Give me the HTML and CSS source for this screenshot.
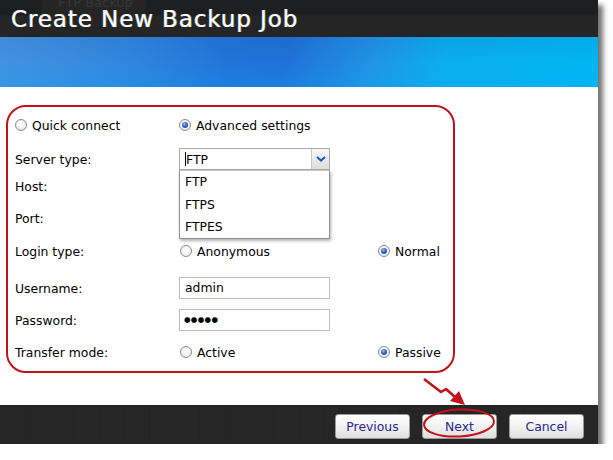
FILE: index.html
```html
<!DOCTYPE html>
<html>
<head>
<meta charset="utf-8">
<link rel="stylesheet" href="styles.css">
</head>
<body>
<div class="window">
  <header class="titlebar">
    <span class="ghost-tab">FTP Backup</span>
    <h1 class="title">Create New Backup Job</h1>
  </header>
  <div class="banner"><div class="swoosh"></div></div>
  <main class="content">
    <div class="redbox">
      <div class="row">
        <label class="opt"><span class="radio"></span>Quick connect</label>
        <label class="opt"><span class="radio on"></span>Advanced settings</label>
      </div>
      <div class="row">
        <span class="lbl">Server type:</span>
        <div class="select-wrap">
          <div class="select"><span class="caret"></span><span class="sel-text">FTP</span><span class="sel-btn"><svg width="10" height="6" viewBox="0 0 10 6"><path d="M1 1 L5 4.5 L9 1" fill="none" stroke="#1a5cc8" stroke-width="2.2"/></svg></span></div>
          <ul class="dropdown">
            <li>FTP</li>
            <li>FTPS</li>
            <li>FTPES</li>
          </ul>
        </div>
      </div>
      <div class="row">
        <span class="lbl">Host:</span>
        <div class="field"></div>
      </div>
      <div class="row">
        <span class="lbl">Port:</span>
        <div class="field"></div>
      </div>
      <div class="row">
        <span class="lbl">Login type:</span>
        <label class="opt ind"><span class="radio"></span>Anonymous</label>
        <label class="opt"><span class="radio on"></span>Normal</label>
      </div>
      <div class="row">
        <span class="lbl">Username:</span>
        <div class="field">admin</div>
      </div>
      <div class="row">
        <span class="lbl">Password:</span>
        <div class="field pw">●●●●●</div>
      </div>
      <div class="row">
        <span class="lbl">Transfer mode:</span>
        <label class="opt ind"><span class="radio"></span>Active</label>
        <label class="opt"><span class="radio on"></span>Passive</label>
      </div>
    </div>
  </main>
  <footer class="footer">
    <button class="btn">Previous</button>
    <button class="btn">Next</button>
    <button class="btn">Cancel</button>
  </footer>
  <svg class="annot" width="598" height="460" viewBox="0 0 598 460">
    <polyline points="424,379 441,392 446,389 455,397" fill="none" stroke="#c4121a" stroke-width="2.6" stroke-linejoin="round"/>
    <polygon points="465,405 450,401 459,391" fill="#c4121a"/>
    <ellipse cx="459" cy="423" rx="35" ry="13.5" transform="rotate(-3 459 423)" fill="none" stroke="#c4121a" stroke-width="2"/>
  </svg>
</div>
</body>
</html>
```
FILE: styles.css
```css
* { box-sizing: border-box; }
html, body { margin: 0; padding: 0; background: #fff; }
body { font-family: "DejaVu Sans", Verdana, sans-serif; font-size: 12.4px; color: #000; }

.window {
  position: relative;
  width: 598px;
  height: 444px;
  display: flex;
  flex-direction: column;
  background: #fff;
  box-shadow: 5px 5px 5px rgba(0,0,0,0.55);
}

.titlebar {
  position: relative;
  height: 37px;
  background: linear-gradient(#1e1f21 0, #1e1f21 15px, #252525 16px, #252525 100%);
  overflow: hidden;
}
.ghost-tab {
  position: absolute;
  left: 42px;
  top: -8px;
  width: 104px;
  height: 23px;
  padding-left: 16px;
  padding-top: 3px;
  background: #252525;
  color: #363636;
  font-size: 13px;
}
.title {
  position: relative;
  margin: 0;
  padding: 5px 0 0 11px;
  font-family: "DejaVu Sans", sans-serif;
  font-weight: normal;
  font-size: 23px;
  letter-spacing: 0.9px;
  color: #fff;
  line-height: 28px;
  text-shadow: -0.6px 0 0 rgba(120,180,255,0.6), 0.6px 0 0 rgba(255,230,120,0.5);
}

.banner {
  position: relative;
  height: 50px;
  overflow: hidden;
  background:
    linear-gradient(180deg, rgba(0,40,120,0.08) 0%, rgba(255,255,255,0) 55%, rgba(0,170,245,0.22) 100%),
    linear-gradient(100deg, #4493e2 0%, #3186de 22%, #2274d9 38%, #1f72d8 48%, #2294e6 62%, #0caeee 74%, #00b6f2 100%);
}
.swoosh {
  position: absolute;
  left: 300px;
  top: -60px;
  width: 560px;
  height: 160px;
  border-radius: 50%;
  border-bottom: 30px solid rgba(120,210,255,0.25);
  transform: rotate(-12deg);
}

.content {
  flex: 1;
  padding: 18px 0 0 6px;
}
.redbox {
  width: 449px;
  height: 268px;
  border: 2px solid #c4121a;
  border-radius: 20px;
  padding: 0 0 0 7px;
}
.row {
  display: grid;
  grid-template-columns: 164px 199px auto;
  align-items: center;
  height: 22px;
}
.row:nth-child(1) { margin-top: 7px; }
.row:nth-child(2) { margin-top: 12px; }
.row:nth-child(3) { margin-top: 5px; }
.row:nth-child(4) { margin-top: 10px; }
.row:nth-child(5) { margin-top: 11px; }
.row:nth-child(6) { margin-top: 15px; }
.row:nth-child(7) { margin-top: 10px; }
.row:nth-child(8) { margin-top: 10px; }

.lbl { white-space: nowrap; }
.opt { display: flex; align-items: center; gap: 5px; white-space: nowrap; }
.opt.ind { padding-left: 1px; }

.radio {
  width: 12px;
  height: 12px;
  border-radius: 50%;
  border: 1px solid #8c8c8c;
  background: radial-gradient(circle at 50% 40%, #ffffff 0, #f4f4f4 50%, #dcdcdc 100%);
  position: relative;
  flex: none;
}
.radio.on::after {
  content: "";
  position: absolute;
  left: 2px;
  top: 2px;
  width: 6px;
  height: 6px;
  border-radius: 50%;
  background: radial-gradient(circle at 40% 35%, #9cc4ff 0, #2d63c8 45%, #123e96 100%);
}

.select-wrap { position: relative; width: 151px; height: 22px; }
.select {
  display: flex;
  align-items: center;
  width: 151px;
  height: 22px;
  border: 1px solid #a9a9a9;
  background: #fff;
}
.caret {
  width: 1px;
  height: 14px;
  background: #000;
  margin-left: 5px;
}
.sel-text { flex: 1; }
.sel-btn {
  width: 18px;
  height: 20px;
  border-left: 1px solid #c8c8c8;
  background: linear-gradient(#f6f6f6, #dedede);
  display: flex;
  align-items: center;
  justify-content: center;
}
.dropdown {
  position: absolute;
  left: 0;
  top: 22px;
  width: 151px;
  height: 69px;
  margin: 0;
  padding: 0;
  list-style: none;
  background: #fff;
  border: 1px solid #8f8f8f;
  border-top-color: #c8c8c8;
  box-shadow: 1px 2px 3px rgba(0,0,0,0.3);
  z-index: 2;
}
.dropdown li {
  height: 22.5px;
  line-height: 22px;
  padding-left: 5px;
}

.field {
  width: 151px;
  height: 22px;
  border: 1px solid #b8bcc8;
  background: #fff;
  padding-left: 5px;
  line-height: 20px;
}
.field.pw { font-size: 7.5px; letter-spacing: 0.3px; padding-left: 4px; }

.footer {
  height: 39px;
  background:
    repeating-linear-gradient(90deg, rgba(255,255,255,0.008) 0 24px, rgba(0,0,0,0.025) 24px 25px),
    #242424;
  display: flex;
  justify-content: flex-end;
  align-items: flex-start;
  gap: 12px;
  padding: 9px 14px 0 0;
}
.btn {
  width: 75px;
  height: 25px;
  border: 1px solid #9a9a9a;
  border-radius: 3px;
  background: linear-gradient(#ffffff 0%, #f2f2f2 50%, #dedede 100%);
  color: #26288a;
  font-family: "DejaVu Sans", Verdana, sans-serif;
  font-size: 12.4px;
  padding: 0;
}

.annot {
  position: absolute;
  left: 0;
  top: 0;
  pointer-events: none;
  z-index: 5;
}
```
